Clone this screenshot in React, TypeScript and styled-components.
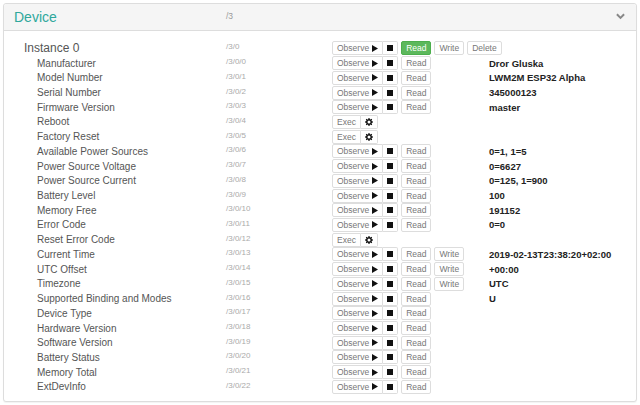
import * as React from 'react'
import styled, { createGlobalStyle } from 'styled-components'

const GlobalStyle = createGlobalStyle`
  html, body {
    margin: 0;
    padding: 0;
    background: #ffffff;
  }
  body {
    font-family: "Liberation Sans", Arial, sans-serif;
    color: #555555;
  }
`

const Page = styled.div`
  padding: 3px 3px 2px 3px;
  width: 640px;
  box-sizing: border-box;
`

const Panel = styled.section`
  border: 1px solid #dddddd;
  border-radius: 3px;
  background: #ffffff;
  box-shadow: 0 1px 1px rgba(0, 0, 0, 0.05);
`

const PanelHeader = styled.header`
  height: 26px;
  display: grid;
  grid-template-columns: 212px 1fr 20px;
  align-items: center;
  padding-left: 10px;
  background: #f5f5f5;
  border-bottom: 1px solid #dddddd;
  border-radius: 3px 3px 0 0;
`

const Title = styled.h2`
  margin: 0;
  font-size: 14px;
  font-weight: normal;
  color: #2fa89c;
`

const HeaderPath = styled.span`
  font-size: 8.5px;
  color: #999999;
  align-self: start;
  padding-top: 7px;
`

const Chevron = styled.svg`
  width: 9px;
  height: 7px;
  align-self: start;
  margin-top: 9px;
`

const PanelBody = styled.div`
  padding: 10px 0 7px 20px;
`

const Row = styled.div`
  display: grid;
  grid-template-columns: 202px 106px 157px 1fr;
  align-items: center;
  height: 14.73px;
`

const Label = styled.span<{ $instance?: boolean }>`
  font-size: ${p => (p.$instance ? '12px' : '10px')};
  padding-left: ${p => (p.$instance ? '0' : '13px')};
  color: #555555;
  white-space: nowrap;
`

const Path = styled.span`
  font-size: 8px;
  color: #aaaaaa;
  margin-top: -3px;
`

const Actions = styled.div`
  display: flex;
  align-items: center;
  gap: 3px;
`

const Group = styled.div`
  display: flex;
`

const Button = styled.button<{ $primary?: boolean }>`
  height: 14px;
  padding: 0 4px;
  border: 1px solid ${p => (p.$primary ? '#4cae4c' : '#dddddd')};
  border-radius: 2px;
  background: ${p => (p.$primary ? '#5cb85c' : '#ffffff')};
  color: ${p => (p.$primary ? '#ffffff' : '#777777')};
  font-family: "Liberation Sans", Arial, sans-serif;
  font-size: 8.5px;
  line-height: 12px;
  display: flex;
  align-items: center;
  gap: 3px;
  cursor: pointer;
  box-sizing: border-box;

  ${Group} > & + & {
    border-left: none;
    border-top-left-radius: 0;
    border-bottom-left-radius: 0;
  }
  ${Group} > &:not(:last-child) {
    border-top-right-radius: 0;
    border-bottom-right-radius: 0;
  }
`

const Value = styled.span`
  font-size: 9.5px;
  font-weight: bold;
  color: #222222;
  white-space: nowrap;
`

const Play = () => (
  <svg width="6" height="7" viewBox="0 0 6 7">
    <path d="M0 0 L6 3.5 L0 7 Z" fill="#111" />
  </svg>
)

const Stop = () => (
  <svg width="6" height="6" viewBox="0 0 6 6">
    <rect width="6" height="6" fill="#111" />
  </svg>
)

const Gear = () => (
  <svg width="8" height="8" viewBox="0 0 16 16">
    <path
      fill="#111"
      d="M7 0h2l.4 2.2a6 6 0 0 1 1.6.7l1.9-1.3 1.4 1.4-1.3 1.9c.3.5.5 1 .7 1.6L16 7v2l-2.2.4a6 6 0 0 1-.7 1.6l1.3 1.9-1.4 1.4-1.9-1.3c-.5.3-1 .5-1.6.7L9 16H7l-.4-2.2a6 6 0 0 1-1.6-.7l-1.9 1.3-1.4-1.4 1.3-1.9a6 6 0 0 1-.7-1.6L0 9V7l2.2-.4c.2-.6.4-1.1.7-1.6L1.6 3.1 3 1.7l1.9 1.3c.5-.3 1-.5 1.6-.7zM8 5a3 3 0 1 0 0 6 3 3 0 0 0 0-6z"
    />
  </svg>
)

type Kind = 'r' | 'rw' | 'e'

interface Resource {
  id: number
  name: string
  kind: Kind
  value?: string
}

const resources: Resource[] = [
  { id: 0, name: 'Manufacturer', kind: 'r', value: 'Dror Gluska' },
  { id: 1, name: 'Model Number', kind: 'r', value: 'LWM2M ESP32 Alpha' },
  { id: 2, name: 'Serial Number', kind: 'r', value: '345000123' },
  { id: 3, name: 'Firmware Version', kind: 'r', value: 'master' },
  { id: 4, name: 'Reboot', kind: 'e' },
  { id: 5, name: 'Factory Reset', kind: 'e' },
  { id: 6, name: 'Available Power Sources', kind: 'r', value: '0=1, 1=5' },
  { id: 7, name: 'Power Source Voltage', kind: 'r', value: '0=6627' },
  { id: 8, name: 'Power Source Current', kind: 'r', value: '0=125, 1=900' },
  { id: 9, name: 'Battery Level', kind: 'r', value: '100' },
  { id: 10, name: 'Memory Free', kind: 'r', value: '191152' },
  { id: 11, name: 'Error Code', kind: 'r', value: '0=0' },
  { id: 12, name: 'Reset Error Code', kind: 'e' },
  { id: 13, name: 'Current Time', kind: 'rw', value: '2019-02-13T23:38:20+02:00' },
  { id: 14, name: 'UTC Offset', kind: 'rw', value: '+00:00' },
  { id: 15, name: 'Timezone', kind: 'rw', value: 'UTC' },
  { id: 16, name: 'Supported Binding and Modes', kind: 'r', value: 'U' },
  { id: 17, name: 'Device Type', kind: 'r' },
  { id: 18, name: 'Hardware Version', kind: 'r' },
  { id: 19, name: 'Software Version', kind: 'r' },
  { id: 20, name: 'Battery Status', kind: 'r' },
  { id: 21, name: 'Memory Total', kind: 'r' },
  { id: 22, name: 'ExtDevInfo', kind: 'r' },
]

function ObserveGroup () {
  return (
    <Group>
      <Button>Observe <Play /></Button>
      <Button><Stop /></Button>
    </Group>
  )
}

function ResourceRow ({ res }: { res: Resource }) {
  return (
    <Row>
      <Label>{res.name}</Label>
      <Path>/3/0/{res.id}</Path>
      <Actions>
        {res.kind === 'e'
          ? (
            <Group>
              <Button>Exec</Button>
              <Button><Gear /></Button>
            </Group>
            )
          : (
            <>
              <ObserveGroup />
              <Button>Read</Button>
              {res.kind === 'rw' && <Button>Write</Button>}
            </>
            )}
      </Actions>
      <Value>{res.value}</Value>
    </Row>
  )
}

export default function App (): React.ReactElement {
  return (
    <>
      <GlobalStyle />
      <Page>
        <Panel>
          <PanelHeader>
            <Title>Device</Title>
            <HeaderPath>/3</HeaderPath>
            <Chevron viewBox="0 0 10 7">
              <path d="M1 1 L5 5 L9 1" stroke="#888" strokeWidth="2.2" fill="none" />
            </Chevron>
          </PanelHeader>
          <PanelBody>
            <Row>
              <Label $instance>Instance 0</Label>
              <Path>/3/0</Path>
              <Actions>
                <ObserveGroup />
                <Button $primary>Read</Button>
                <Button>Write</Button>
                <Button>Delete</Button>
              </Actions>
              <Value />
            </Row>
            {resources.map(r => <ResourceRow key={r.id} res={r} />)}
          </PanelBody>
        </Panel>
      </Page>
    </>
  )
}
